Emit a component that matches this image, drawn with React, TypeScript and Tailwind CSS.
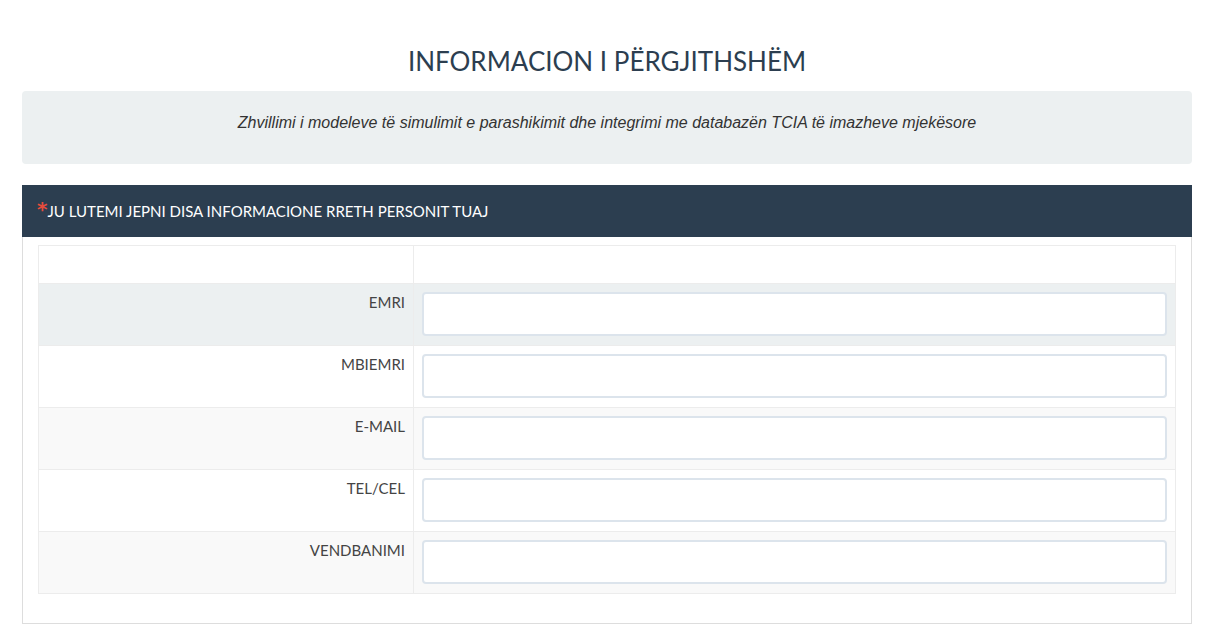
import React from "react";

const rows = [
  { label: "EMRI", bg: "bg-[#ecf0f1]" },
  { label: "MBIEMRI", bg: "bg-white" },
  { label: "E-MAIL", bg: "bg-[#f9f9f9]" },
  { label: "TEL/CEL", bg: "bg-white" },
  { label: "VENDBANIMI", bg: "bg-[#f9f9f9]" },
];

export default function App() {
  return (
    <div className="min-h-[644px] bg-white font-['Lato','Liberation_Sans',sans-serif] text-[#2c3e50]">
      <div className="pl-[22px] pr-[31px] pt-[44px]">
        <h1 className="text-center text-[26px] leading-[34px] font-normal text-[#2c3e50]">
          INFORMACION I PËRGJITHSHËM
        </h1>
        <div className="mt-[13px] h-[73px] rounded-[4px] bg-[#ecf0f1] flex items-center justify-center">
          <p className="font-['Liberation_Sans',Arial,sans-serif] italic text-[16px] text-[#333] leading-[22px] -mt-[10px]">
            Zhvillimi i modeleve të simulimit e parashikimit dhe integrimi me databazën TCIA të imazheve mjekësore
          </p>
        </div>
        <div className="mt-[21px] border border-[#dddddd] border-t-0">
          <div className="h-[52px] bg-[#2c3e50] flex items-center pl-[15px] -mx-px">
            <span className="font-['DejaVu_Sans',sans-serif] text-[#e74c3c] text-[20px] leading-none self-start mt-[14px] font-bold">*</span>
            <span className="text-white text-[15px] leading-none">
              JU LUTEMI JEPNI DISA INFORMACIONE RRETH PERSONIT TUAJ
            </span>
          </div>
          <div className="px-[15px] pt-[8px] pb-[29px]">
            <div className="border border-[#ececec]">
              <div className="flex h-[37px] bg-white">
                <div className="w-[375px] border-r border-[#ececec]" />
                <div className="flex-1" />
              </div>
              {rows.map((r) => (
                <div key={r.label} className={`flex h-[62px] border-t border-[#ececec] ${r.bg}`}>
                  <div className="w-[375px] border-r border-[#ececec] pr-[8px] pt-[7px] text-right text-[15px] leading-[22px] text-[#444]">
                    {r.label}
                  </div>
                  <div className="flex-1 pl-[8px] pr-[8px] pt-[8px]">
                    <input
                      type="text"
                      className="block w-full h-[44px] rounded-[4px] border-2 border-[#dce4ec] bg-white outline-none"
                    />
                  </div>
                </div>
              ))}
            </div>
          </div>
        </div>
      </div>
    </div>
  );
}
